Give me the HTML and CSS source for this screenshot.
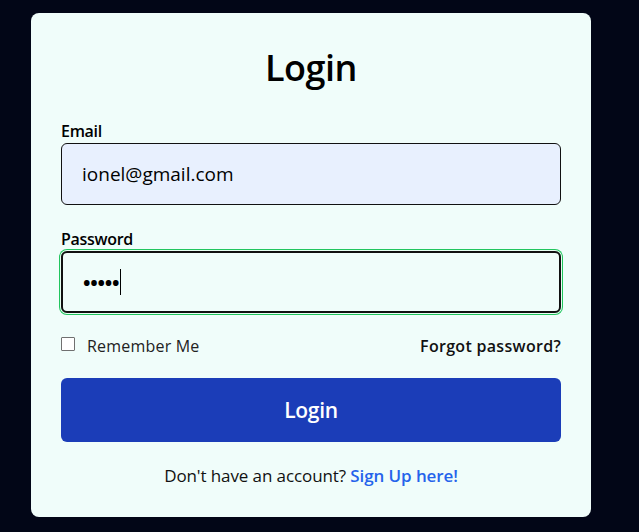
FILE: index.html
```html
<!DOCTYPE html>
<html lang="en">
<head>
<meta charset="utf-8">
<title>Login</title>
<link rel="stylesheet" href="styles.css">
</head>
<body>
<main class="page">
  <form class="card">
    <h1 class="title">Login</h1>
    <div class="field">
      <label class="label" for="email">Email</label>
      <div class="input input-autofill" id="email">ionel@gmail.com</div>
    </div>
    <div class="field">
      <label class="label" for="password">Password</label>
      <div class="input input-focus" id="password"><span class="dots">•••••</span><span class="caret"></span></div>
    </div>
    <div class="options">
      <label class="remember"><span class="checkbox"></span>Remember Me</label>
      <a class="forgot">Forgot password?</a>
    </div>
    <button type="button" class="btn">Login</button>
    <p class="signup">Don't have an account? <a class="signup-link">Sign Up here!</a></p>
  </form>
</main>
</body>
</html>
```

FILE: styles.css
```css
* { box-sizing: border-box; }
html, body { margin: 0; padding: 0; }
body {
  background: #020617;
  font-family: "Open Sans", "Noto Sans", sans-serif;
  color: #000;
  width: 639px;
  height: 532px;
  overflow: hidden;
}
.page {
  padding: 13px 0 0 31px;
}
.card {
  width: 560px;
  height: 504px;
  background: #f0fdfa;
  border-radius: 8px;
  padding: 35px 30px 0 30px;
  display: flex;
  flex-direction: column;
}
.title {
  margin: 0 0 33px 0;
  text-align: center;
  font-size: 36px;
  line-height: 40px;
  font-weight: 600;
  letter-spacing: -0.5px;
}
.field {
  display: flex;
  flex-direction: column;
}
.field + .field { margin-top: 24px; }
.label {
  font-size: 16px;
  line-height: 20px;
  font-weight: 600;
  margin-bottom: 2px;
  letter-spacing: -0.3px;
}
.input {
  height: 62px;
  border: 1px solid #111;
  border-radius: 6px;
  padding: 0 20px;
  display: flex;
  align-items: center;
  font-size: 19px;
}
.input-autofill { background: #e8f0fe; }
.input-focus {
  border: 2px solid #111;
  box-shadow: 0 0 0 1px #e8fff3, 0 0 0 2px #22c55e;
  padding-left: 20px;
}
.dots {
  font-size: 20px;
  letter-spacing: -0.3px;
  font-weight: 700;
}
.caret {
  display: inline-block;
  width: 1px;
  height: 26px;
  background: #000;
  margin-left: 1px;
}
.options {
  margin-top: 22px;
  display: flex;
  justify-content: space-between;
  align-items: center;
  font-size: 16px;
  line-height: 22px;
}
.remember {
  display: flex;
  align-items: center;
  color: #222;
  letter-spacing: 0.2px;
}
.checkbox {
  width: 14px;
  height: 14px;
  border: 1px solid #707070;
  border-radius: 1px;
  background: #fff;
  margin-right: 12px;
  margin-top: -4px;
}
.forgot {
  font-weight: 600;
  color: #111;
  letter-spacing: 0.3px;
}
.btn {
  margin-top: 21px;
  height: 64px;
  width: 100%;
  border: none;
  border-radius: 6px;
  background: #1b3db8;
  color: #fff;
  font-family: inherit;
  font-size: 21px;
  font-weight: 600;
  letter-spacing: -0.3px;
}
.signup {
  margin: 22px 0 0 0;
  text-align: center;
  font-size: 17px;
  line-height: 24px;
  color: #111;
  letter-spacing: -0.1px;
}
.signup-link {
  color: #2563eb;
  font-weight: 600;
}
```
